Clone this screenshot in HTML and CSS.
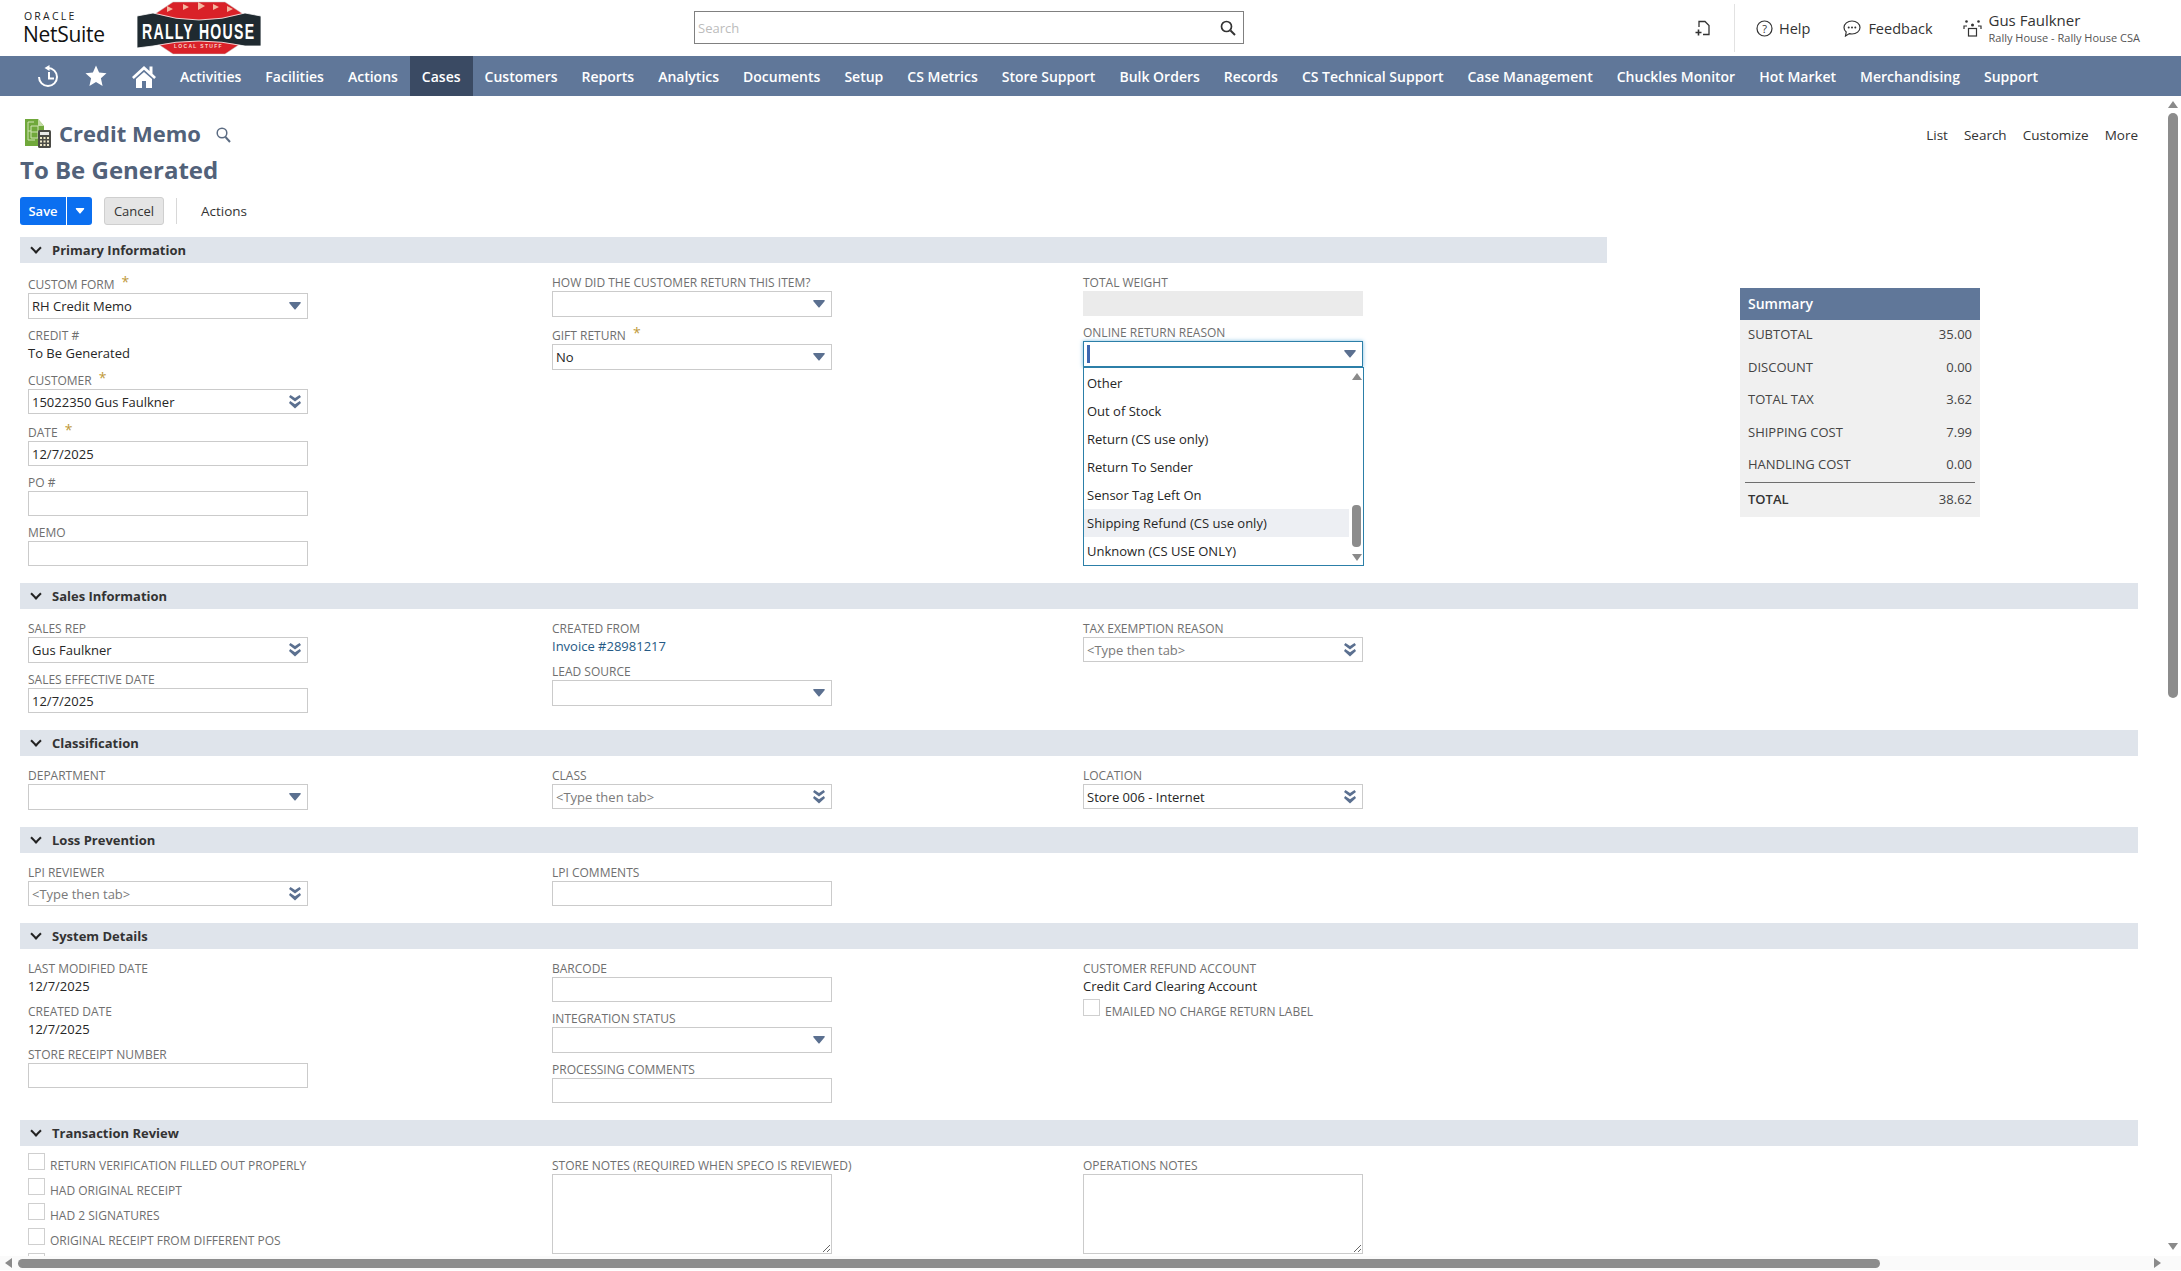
FILE: index.html
```html
<!DOCTYPE html>
<html lang="en">
<head>
    <meta charset="UTF-8">
    <title>Credit Memo - NetSuite</title>
    <link rel="stylesheet" href="styles.css">
</head>
<body>
    <svg class="sprite" width="0" height="0">
        <symbol id="arrow-single" viewBox="0 0 12 8"><path d="M1 0h10q1.500 0 .6 1.200L6.800 7q-.8 1-1.600 0L.4 1.200Q-.5 0 1 0z"/></symbol>
        <symbol id="arrow-double" viewBox="0 0 12 14"><path d="M1.500 0L6 3l4.500-3L12 2 6 6.500 0 2zM1.200 6L6 9.300 10.800 6 12 8 6 13.500 0 8z"/></symbol>
    </svg>

    <header class="top-bar">
        <div class="logo-netsuite">
            <span class="oracle-text">ORACLE</span>
            <span class="netsuite-text">NetSuite</span>
        </div>
        <div class="logo-rally">
            <svg width="125" height="56" viewBox="0 0 125 56">
                <path d="M36 2H88L106 14V42L88 54H36L18 42V14z" fill="#d92128" stroke="#c9c9c9" stroke-width=".5"/>
                <path d="M0 16L16 13Q62 27 108 13L124 16V46L108 46Q62 36 16 46L0 48z" fill="#1f2a30" stroke="#fff" stroke-width=".8"/>
                <path d="M30 12l0-6 6 3zM46 10l0-6 6 3zM61 10l0-8 7 4zM76 10l0-6 6 3zM90 12l0-6 6 3z" fill="#f3b7a0"/>
                <text transform="translate(5 39) scale(.64 1)" class="rally-text">RALLY HOUSE</text>
                <text x="37" y="47.500" class="local-text">LOCAL STUFF</text>
            </svg>
        </div>
        <div class="global-search">
            <input class="global-input" placeholder="Search">
            <svg class="global-icon" width="16" height="16" viewBox="0 0 16 16"><circle cx="6.500" cy="6.500" r="5" fill="none" stroke="#333" stroke-width="1.700"/><path d="M10.500 10.500L15 15" stroke="#333" stroke-width="2"/></svg>
        </div>
        <div class="top-actions">
            <svg class="new-icon" width="16" height="16" viewBox="0 0 16 16" fill="none" stroke="#333" stroke-width="1.300"><path d="M4 7V1.500h6l4 4v9H8"/><path d="M3.500 9.500v6M.5 12.500h6" stroke-width="1.600"/></svg>
            <span class="top-divider"></span>
            <a class="top-link help-link">
                <svg width="17" height="17" viewBox="0 0 17 17"><circle cx="8.500" cy="8.500" r="7.500" fill="none" stroke="#333" stroke-width="1.200"/><text x="8.500" y="12.500" class="help-mark">?</text></svg>
                Help
            </a>
            <a class="top-link feedback-link">
                <svg width="18" height="17" viewBox="0 0 18 17"><path d="M9 1c4.400 0 8 2.900 8 6.500S13.400 14 9 14c-1 0-1.800-.1-2.600-.4L2.500 16l.7-4C1.800 10.800 1 9.200 1 7.500 1 3.900 4.600 1 9 1z" fill="none" stroke="#333" stroke-width="1.200"/><circle cx="5.700" cy="7.500" r="1" fill="#333"/><circle cx="9" cy="7.500" r="1" fill="#333"/><circle cx="12.300" cy="7.500" r="1" fill="#333"/></svg>
                Feedback
            </a>
            <a class="user-link">
                <svg width="19" height="18" viewBox="0 0 19 18" fill="none" stroke="#333" stroke-width="1.200"><circle cx="9.500" cy="6" r="1.500" fill="#333" stroke="none"/><circle cx="3.500" cy="2.500" r="1.300" fill="#333" stroke="none"/><circle cx="15.500" cy="2.500" r="1.300" fill="#333" stroke="none"/><path d="M1 10V7h3M18 10V7h-3"/><rect x="5.500" y="9.500" width="8" height="7.500"/></svg>
                <span class="user-text">
                    <span class="user-name">Gus Faulkner</span>
                    <span class="user-role">Rally House - Rally House CSA</span>
                </span>
            </a>
        </div>
    </header>

    <nav class="main-nav">
        <span class="nav-icon history-icon">
            <svg width="22" height="22" viewBox="0 0 22 22" fill="none" stroke="#fff" stroke-width="2"><path d="M11 3a9 9 0 1 1-9 9"/><path d="M12 7v6.500h5"/><path d="M12.500 0L7.500 3l5 3z" fill="#fff" stroke="none"/></svg>
        </span>
        <span class="nav-icon star-icon">
            <svg width="22" height="22" viewBox="0 0 22 22"><path d="M11 .5l3.100 7.100 7.400.7-5.600 5 1.700 7.700L11 17l-6.600 4 1.700-7.700-5.600-5 7.400-.7z" fill="#fff"/></svg>
        </span>
        <span class="nav-icon home-icon">
            <svg width="24" height="23" viewBox="0 0 24 23"><path d="M12 1L0 12l1.800 2L12 4.700 22.200 14l1.800-2-3.500-3.200V1.500h-3v4.500z" fill="#fff"/><path d="M12 7L4 14v9h16v-9zM10 16h4v7h-4z" fill="#fff" fill-rule="evenodd"/></svg>
        </span>
        <a class="nav-item">Activities</a>
        <a class="nav-item">Facilities</a>
        <a class="nav-item">Actions</a>
        <a class="nav-item active">Cases</a>
        <a class="nav-item">Customers</a>
        <a class="nav-item">Reports</a>
        <a class="nav-item">Analytics</a>
        <a class="nav-item">Documents</a>
        <a class="nav-item">Setup</a>
        <a class="nav-item">CS Metrics</a>
        <a class="nav-item">Store Support</a>
        <a class="nav-item">Bulk Orders</a>
        <a class="nav-item">Records</a>
        <a class="nav-item">CS Technical Support</a>
        <a class="nav-item">Case Management</a>
        <a class="nav-item">Chuckles Monitor</a>
        <a class="nav-item">Hot Market</a>
        <a class="nav-item">Merchandising</a>
        <a class="nav-item">Support</a>
    </nav>

    <main class="page">
        <div class="title-row">
            <svg class="record-icon" width="26" height="30" viewBox="0 0 26 30">
                <path d="M0 1h13l6 7v20H0z" fill="#70a83b"/>
                <path d="M13 1l6 7h-6z" fill="#c5dca6"/>
                <path d="M3 4h6M3 4v18h7M6 8h7v12M6 8v12h7M3 13h3M6 14h7" fill="none" stroke="#cfe3b4" stroke-width="1"/>
                <rect x="13" y="12" width="13" height="18" rx="1.500" fill="#4b4b46"/>
                <rect x="15" y="14" width="9" height="3" fill="#e9e9e9"/>
                <path d="M15 19h2v2h-2zM18.500 19h2v2h-2zM22 19h2v2h-2zM15 22.500h2v2h-2zM18.500 22.500h2v2h-2zM22 22.500h2v2h-2zM15 26h2v2h-2zM18.500 26h2v2h-2zM22 26h2v2h-2z" fill="#efe9c9"/>
            </svg>
            <h1 class="record-type">Credit Memo</h1>
            <svg class="title-search" width="15" height="16" viewBox="0 0 15 16"><circle cx="6" cy="6" r="4.800" fill="none" stroke="#5b6b82" stroke-width="1.500"/><path d="M9.500 10L14 15" stroke="#5b6b82" stroke-width="2"/></svg>
            <div class="page-links">
                <a>List</a>
                <a>Search</a>
                <a>Customize</a>
                <a>More</a>
            </div>
        </div>
        <div class="record-name">To Be Generated</div>

        <div class="button-row">
            <div class="save-btn">
                <span class="save-main">Save</span>
                <span class="save-more"><svg width="10" height="6" viewBox="0 0 12 8" fill="#fff"><use href="#arrow-single"/></svg></span>
            </div>
            <button class="cancel-btn">Cancel</button>
            <span class="btn-divider"></span>
            <span class="actions-btn">Actions</span>
        </div>

        <div class="primary-wrap">
            <section class="section primary-section">
                <div class="section-bar"><span class="chevron"></span>Primary Information</div>
                <div class="form-grid">
                    <div class="col">
                        <div class="field">
                            <label class="req">CUSTOM FORM <span class="star">*</span></label>
                            <div class="box select"><span>RH Credit Memo</span><svg class="arrow"><use href="#arrow-single"/></svg></div>
                        </div>
                        <div class="field">
                            <label>CREDIT #</label>
                            <div class="value">To Be Generated</div>
                        </div>
                        <div class="field">
                            <label class="req">CUSTOMER <span class="star">*</span></label>
                            <div class="box"><span>15022350 Gus Faulkner</span><svg class="arrow double"><use href="#arrow-double"/></svg></div>
                        </div>
                        <div class="field">
                            <label class="req">DATE <span class="star">*</span></label>
                            <div class="box"><span>12/7/2025</span></div>
                        </div>
                        <div class="field">
                            <label>PO #</label>
                            <div class="box"></div>
                        </div>
                        <div class="field">
                            <label>MEMO</label>
                            <div class="box"></div>
                        </div>
                    </div>
                    <div class="col">
                        <div class="field">
                            <label>HOW DID THE CUSTOMER RETURN THIS ITEM?</label>
                            <div class="box select"><svg class="arrow"><use href="#arrow-single"/></svg></div>
                        </div>
                        <div class="field">
                            <label class="req">GIFT RETURN <span class="star">*</span></label>
                            <div class="box select"><span>No</span><svg class="arrow"><use href="#arrow-single"/></svg></div>
                        </div>
                    </div>
                    <div class="col">
                        <div class="field">
                            <label>TOTAL WEIGHT</label>
                            <div class="box disabled"></div>
                        </div>
                        <div class="field combo">
                            <label>ONLINE RETURN REASON</label>
                            <div class="box select focused"><span class="caret"></span><svg class="arrow"><use href="#arrow-single"/></svg></div>
                            <div class="dropdown">
                                <div class="option">Other</div>
                                <div class="option">Out of Stock</div>
                                <div class="option">Return (CS use only)</div>
                                <div class="option">Return To Sender</div>
                                <div class="option">Sensor Tag Left On</div>
                                <div class="option hover">Shipping Refund (CS use only)</div>
                                <div class="option">Unknown (CS USE ONLY)</div>
                                <span class="drop-arrow up"></span>
                                <span class="drop-thumb"></span>
                                <span class="drop-arrow down"></span>
                            </div>
                        </div>
                    </div>
                </div>
            </section>

            <aside class="summary">
                <div class="summary-head">Summary</div>
                <div class="summary-row"><span>SUBTOTAL</span><span>35.00</span></div>
                <div class="summary-row"><span>DISCOUNT</span><span>0.00</span></div>
                <div class="summary-row"><span>TOTAL TAX</span><span>3.62</span></div>
                <div class="summary-row"><span>SHIPPING COST</span><span>7.99</span></div>
                <div class="summary-row"><span>HANDLING COST</span><span>0.00</span></div>
                <div class="summary-row summary-total"><span>TOTAL</span><span>38.62</span></div>
            </aside>
        </div>

        <section class="section">
            <div class="section-bar"><span class="chevron"></span>Sales Information</div>
            <div class="form-grid">
                <div class="col">
                    <div class="field">
                        <label>SALES REP</label>
                        <div class="box select"><span>Gus Faulkner</span><svg class="arrow double"><use href="#arrow-double"/></svg></div>
                    </div>
                    <div class="field">
                        <label>SALES EFFECTIVE DATE</label>
                        <div class="box"><span>12/7/2025</span></div>
                    </div>
                </div>
                <div class="col">
                    <div class="field">
                        <label>CREATED FROM</label>
                        <div class="value link">Invoice #28981217</div>
                    </div>
                    <div class="field">
                        <label>LEAD SOURCE</label>
                        <div class="box select"><svg class="arrow"><use href="#arrow-single"/></svg></div>
                    </div>
                </div>
                <div class="col">
                    <div class="field">
                        <label>TAX EXEMPTION REASON</label>
                        <div class="box"><span class="hint">&lt;Type then tab&gt;</span><svg class="arrow double"><use href="#arrow-double"/></svg></div>
                    </div>
                </div>
            </div>
        </section>

        <section class="section">
            <div class="section-bar"><span class="chevron"></span>Classification</div>
            <div class="form-grid">
                <div class="col">
                    <div class="field">
                        <label>DEPARTMENT</label>
                        <div class="box select"><svg class="arrow"><use href="#arrow-single"/></svg></div>
                    </div>
                </div>
                <div class="col">
                    <div class="field">
                        <label>CLASS</label>
                        <div class="box"><span class="hint">&lt;Type then tab&gt;</span><svg class="arrow double"><use href="#arrow-double"/></svg></div>
                    </div>
                </div>
                <div class="col">
                    <div class="field">
                        <label>LOCATION</label>
                        <div class="box"><span>Store 006 - Internet</span><svg class="arrow double"><use href="#arrow-double"/></svg></div>
                    </div>
                </div>
            </div>
        </section>

        <section class="section">
            <div class="section-bar"><span class="chevron"></span>Loss Prevention</div>
            <div class="form-grid">
                <div class="col">
                    <div class="field">
                        <label>LPI REVIEWER</label>
                        <div class="box"><span class="hint">&lt;Type then tab&gt;</span><svg class="arrow double"><use href="#arrow-double"/></svg></div>
                    </div>
                </div>
                <div class="col">
                    <div class="field">
                        <label>LPI COMMENTS</label>
                        <div class="box"></div>
                    </div>
                </div>
            </div>
        </section>

        <section class="section">
            <div class="section-bar"><span class="chevron"></span>System Details</div>
            <div class="form-grid">
                <div class="col">
                    <div class="field">
                        <label>LAST MODIFIED DATE</label>
                        <div class="value">12/7/2025</div>
                    </div>
                    <div class="field">
                        <label>CREATED DATE</label>
                        <div class="value">12/7/2025</div>
                    </div>
                    <div class="field">
                        <label>STORE RECEIPT NUMBER</label>
                        <div class="box"></div>
                    </div>
                </div>
                <div class="col">
                    <div class="field">
                        <label>BARCODE</label>
                        <div class="box"></div>
                    </div>
                    <div class="field">
                        <label>INTEGRATION STATUS</label>
                        <div class="box select"><svg class="arrow"><use href="#arrow-single"/></svg></div>
                    </div>
                    <div class="field">
                        <label>PROCESSING COMMENTS</label>
                        <div class="box"></div>
                    </div>
                </div>
                <div class="col">
                    <div class="field">
                        <label>CUSTOMER REFUND ACCOUNT</label>
                        <div class="value">Credit Card Clearing Account</div>
                    </div>
                    <div class="check-row"><span class="check"></span><label>EMAILED NO CHARGE RETURN LABEL</label></div>
                </div>
            </div>
        </section>

        <section class="section">
            <div class="section-bar"><span class="chevron"></span>Transaction Review</div>
            <div class="form-grid">
                <div class="col">
                    <div class="check-row"><span class="check"></span><label>RETURN VERIFICATION FILLED OUT PROPERLY</label></div>
                    <div class="check-row"><span class="check"></span><label>HAD ORIGINAL RECEIPT</label></div>
                    <div class="check-row"><span class="check"></span><label>HAD 2 SIGNATURES</label></div>
                    <div class="check-row"><span class="check"></span><label>ORIGINAL RECEIPT FROM DIFFERENT POS</label></div>
                    <div class="check-row"><span class="check"></span></div>
                </div>
                <div class="col">
                    <div class="field">
                        <label>STORE NOTES (REQUIRED WHEN SPECO IS REVIEWED)</label>
                        <textarea class="notes"></textarea>
                    </div>
                </div>
                <div class="col">
                    <div class="field">
                        <label>OPERATIONS NOTES</label>
                        <textarea class="notes"></textarea>
                    </div>
                </div>
            </div>
        </section>
    </main>

    <div class="scroll-v">
        <span class="sb-arrow sb-up"></span>
        <span class="sb-thumb-v"></span>
        <span class="sb-arrow sb-down"></span>
    </div>
    <div class="scroll-h">
        <span class="sb-arrow sb-left"></span>
        <span class="sb-thumb-h"></span>
        <span class="sb-arrow sb-right"></span>
    </div>
</body>
</html>
```

FILE: styles.css
```css
* {
    box-sizing: border-box;
}
html, body {
    height: 1271px;
    overflow: hidden;
}
body {
    position: relative;
    margin: 0;
    font-family: "Open Sans", sans-serif;
    font-size: 13px;
    color: #262626;
    background-color: #fff;
}
a {
    color: inherit;
    text-decoration: none;
}
.sprite {
    position: absolute;
}

/* Top bar */
.top-bar {
    display: flex;
    align-items: center;
    height: 56px;
}
.logo-netsuite {
    display: flex;
    flex-direction: column;
    width: 114px;
    height: 36px;
    margin-left: 23px;
}
.oracle-text {
    height: 13px;
    line-height: 13px;
    margin-left: 1px;
    font-size: 10.500px;
    letter-spacing: 2.200px;
    color: #222;
}
.netsuite-text {
    height: 23px;
    line-height: 23px;
    font-size: 21px;
    letter-spacing: -.3px;
    color: #111;
}
.logo-rally svg {
    display: block;
}
.logo-rally {
    width: 125px;
    height: 56px;
}
.rally-text {
    font-family: "Liberation Sans", sans-serif;
    font-weight: bold;
    font-size: 22px;
    letter-spacing: 2px;
    fill: #fff;
}
.local-text {
    font-family: "Liberation Sans", sans-serif;
    font-weight: bold;
    font-size: 5px;
    letter-spacing: 1.300px;
    fill: #f6d5c8;
}
.global-search {
    position: relative;
    width: 550px;
    height: 33px;
    margin-left: 432px;
    margin-top: -1px;
}
.global-input {
    width: 100%;
    height: 100%;
    padding: 0 30px 0 3px;
    border: 1px solid #808080;
    font: 13px "Open Sans", sans-serif;
    outline: none;
}
.global-input::placeholder {
    color: #bcbcbc;
}
.global-icon {
    position: absolute;
    top: 9px;
    right: 8px;
}
.top-actions {
    display: flex;
    align-items: center;
    margin-left: 451px;
    height: 56px;
}
.new-icon {
    margin-right: 23px;
}
.top-divider {
    width: 1px;
    height: 48px;
    background-color: #e2e2e2;
    margin-right: 21px;
}
.top-link {
    display: flex;
    align-items: center;
    gap: 7px;
    font-size: 14.500px;
    color: #333;
}
.help-link {
    gap: 6px;
    margin-right: 33px;
}
.help-mark {
    font-family: "Open Sans", sans-serif;
    font-size: 11px;
    text-anchor: middle;
    fill: #333;
}
.feedback-link {
    margin-right: 30px;
}
.user-link {
    display: flex;
    align-items: center;
    gap: 7px;
}
.user-text {
    display: flex;
    flex-direction: column;
}
.user-name {
    font-size: 15px;
    line-height: 19px;
    color: #333;
}
.user-role {
    font-size: 11px;
    line-height: 16px;
    color: #555;
}

/* Main navigation */
.main-nav {
    display: flex;
    align-items: stretch;
    height: 40px;
    padding-left: 37px;
    background-color: #607799;
}
.nav-icon {
    display: flex;
    align-items: center;
}
.history-icon {
    width: 48px;
}
.star-icon {
    width: 47px;
}
.home-icon {
    width: 36px;
}
.nav-item {
    display: flex;
    align-items: center;
    padding: 0 12px;
    font-size: 14px;
    font-weight: 600;
    color: #fff;
}
.nav-item.active {
    background-color: #3a4a63;
}

/* Page header */
.page {
    padding: 21px 43px 0 20px;
}
.title-row {
    display: flex;
    align-items: center;
    height: 32px;
    padding-left: 5px;
}
.record-icon {
    margin-right: 8px;
}
.record-type {
    margin: 0 15px 0 0;
    font-size: 22px;
    font-weight: 700;
    color: #52627a;
}
.title-search {
    margin-top: 3px;
}
.page-links {
    display: flex;
    gap: 16px;
    margin-left: auto;
    margin-top: 4px;
    font-size: 13.500px;
    color: #333;
}
.record-name {
    margin-top: 5px;
    line-height: 32px;
    font-size: 24px;
    font-weight: 700;
    color: #52627a;
}
.button-row {
    display: flex;
    align-items: center;
    height: 28px;
    margin-top: 11px;
}
.save-btn {
    display: flex;
    height: 28px;
    width: 72px;
    border-radius: 3px;
    background-color: #0b6ff0;
    color: #fff;
    font-weight: 600;
}
.save-main {
    width: 47px;
    text-align: center;
    line-height: 28px;
    border-right: 1px solid #fff;
}
.save-more {
    display: flex;
    flex: 1;
    align-items: center;
    justify-content: center;
}
.cancel-btn {
    width: 60px;
    height: 28px;
    margin-left: 12px;
    padding: 0;
    border: 1px solid #cfcfcf;
    border-radius: 3px;
    background-color: #e5e5e5;
    font: 13px "Open Sans", sans-serif;
    color: #333;
}
.btn-divider {
    width: 1px;
    height: 26px;
    margin-left: 12px;
    background-color: #d8d8d8;
}
.actions-btn {
    margin-left: 24px;
    font-size: 13.500px;
    color: #333;
}

/* Sections */
.primary-wrap {
    display: flex;
    margin-top: 12px;
}
.primary-section {
    width: 1587px;
    flex: none;
}
.section-bar {
    display: flex;
    align-items: center;
    height: 26px;
    padding-left: 10px;
    background-color: #dfe4eb;
    font-size: 13px;
    font-weight: 700;
    color: #333;
}
.chevron {
    width: 8px;
    height: 8px;
    margin: -4px 12px 0 2px;
    border-right: 2px solid #222;
    border-bottom: 2px solid #222;
    transform: rotate(45deg);
}
.form-grid {
    display: grid;
    grid-template-columns: 524px 531px 1fr;
    padding: 10px 8px 17px;
}
.col {
    width: 100%;
}
.field {
    position: relative;
    margin-bottom: 7px;
}
.col .field:last-child {
    margin-bottom: 0;
}
label {
    display: block;
    height: 18px;
    line-height: 20px;
    font-size: 12px;
    color: #6f6f6f;
    white-space: nowrap;
}
label.req {
    padding-top: 2px;
    height: 20px;
    line-height: 18px;
}
.star {
    position: relative;
    top: -2px;
    margin-left: 4px;
    font-size: 14px;
    color: #c09a3a;
}
.value {
    height: 18px;
    line-height: 18px;
    color: #262626;
}
.value.link {
    color: #255a85;
}
.box {
    position: relative;
    display: flex;
    align-items: center;
    width: 280px;
    height: 25px;
    padding-left: 3px;
    border: 1px solid #cbcbcb;
    background-color: #fff;
}
.box.select {
    height: 26px;
}
.box.disabled {
    border-color: #ebebeb;
    background-color: #ebebeb;
}
.box.focused {
    border-color: #2c7fa8;
    box-shadow: 0 0 4px #7fbce0;
}
.hint {
    color: #7a7a7a;
}
.caret {
    width: 3px;
    height: 18px;
    background-color: #3d66b0;
}
.arrow {
    position: absolute;
    top: 8px;
    right: 6px;
    width: 12px;
    height: 8px;
    fill: #5b7090;
}
.arrow.double {
    top: 5px;
    height: 14px;
}

/* Open dropdown */
.dropdown {
    position: absolute;
    top: 44px;
    left: 0;
    z-index: 5;
    width: 281px;
    height: 199px;
    padding-top: 1px;
    border: 1px solid #2c7fa8;
    background-color: #fff;
}
.option {
    width: 265px;
    height: 28px;
    line-height: 28px;
    padding-left: 3px;
}
.option.hover {
    background-color: #edeff3;
}
.drop-arrow {
    position: absolute;
    left: 268px;
    width: 0;
    height: 0;
    border-left: 5px solid transparent;
    border-right: 5px solid transparent;
}
.drop-arrow.up {
    top: 5px;
    border-bottom: 7px solid #8a8a8a;
}
.drop-arrow.down {
    bottom: 4px;
    border-top: 7px solid #8a8a8a;
}
.drop-thumb {
    position: absolute;
    top: 137px;
    left: 268px;
    width: 9px;
    height: 42px;
    border-radius: 4px;
    background-color: #8c8c8c;
}

/* Checkboxes */
.check-row {
    display: flex;
    gap: 5px;
    height: 18px;
    margin-bottom: 7px;
}
.check {
    flex: none;
    width: 17px;
    height: 17px;
    margin-top: -3px;
    border: 1px solid #cfcfcf;
    background-color: #fff;
}
.notes {
    display: block;
    width: 280px;
    height: 80px;
    margin: 0;
    border: 1px solid #cbcbcb;
    outline: none;
}

/* Summary box */
.summary {
    width: 240px;
    height: 229px;
    margin-top: 51px;
    margin-left: 133px;
    background-color: #f0f0f0;
}
.summary-head {
    height: 32px;
    padding-left: 8px;
    line-height: 32px;
    background-color: #607799;
    font-size: 14px;
    font-weight: 600;
    color: #fff;
}
.summary-row {
    display: flex;
    justify-content: space-between;
    height: 32.500px;
    padding: 0 8px;
    line-height: 29px;
    color: #444;
}
.summary-total {
    height: 33px;
    margin: -1px 5px 0;
    padding: 0 3px;
    line-height: 32px;
    border-top: 1px solid #6e6e6e;
}
.summary-total span:first-child {
    font-weight: 600;
    color: #333;
}

/* Page scrollbars */
.scroll-v {
    position: absolute;
    top: 96px;
    right: 3px;
    bottom: 14px;
    width: 10px;
}
.scroll-h {
    position: absolute;
    left: 0;
    right: 0;
    bottom: 1px;
    height: 14px;
    background-color: #fafafa;
}
.sb-arrow {
    position: absolute;
    width: 0;
    height: 0;
}
.sb-up {
    top: 5px;
    left: 0;
    border-left: 5px solid transparent;
    border-right: 5px solid transparent;
    border-bottom: 7px solid #8a8a8a;
}
.sb-down {
    bottom: 7px;
    left: 0;
    border-left: 5px solid transparent;
    border-right: 5px solid transparent;
    border-top: 7px solid #8a8a8a;
}
.sb-left {
    top: 2px;
    left: 5px;
    border-top: 5px solid transparent;
    border-bottom: 5px solid transparent;
    border-right: 7px solid #8a8a8a;
}
.sb-right {
    top: 2px;
    left: 2154px;
    border-top: 5px solid transparent;
    border-bottom: 5px solid transparent;
    border-left: 7px solid #8a8a8a;
}
.sb-thumb-v {
    position: absolute;
    top: 17px;
    left: 0;
    width: 10px;
    height: 585px;
    border-radius: 5px;
    background-color: #8c8c8c;
}
.sb-thumb-h {
    position: absolute;
    top: 3px;
    left: 18px;
    width: 1862px;
    height: 9px;
    border-radius: 5px;
    background-color: #8c8c8c;
}
```
